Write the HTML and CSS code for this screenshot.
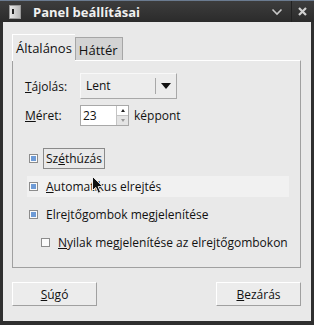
FILE: index.html
```html
<!doctype html>
<html lang="hu">
<head>
    <meta charset="UTF-8">
    <title>Panel beállításai</title>
    <link rel="stylesheet" href="styles.css">
</head>
<body>
<div class="window">
    <div class="titlebar">
        <span class="app-icon"><span class="app-icon-dot"></span></span>
        <span class="title">Panel beállításai</span>
        <span class="tb-btn tb-min">
            <svg width="12" height="8" viewBox="0 0 12 8"><path d="M1.5 1.5 L6 6 L10.5 1.5" fill="none" stroke="#c8c8c8" stroke-width="1.6"/></svg>
        </span>
        <span class="tb-btn tb-close">
            <svg width="11" height="11" viewBox="0 0 11 11"><path d="M2 2 L9 9 M9 2 L2 9" fill="none" stroke="#d0d0d0" stroke-width="2.2"/></svg>
        </span>
    </div>

    <div class="client">
        <div class="tabs">
            <div class="tab active">Általános</div>
            <div class="tab">Háttér</div>
        </div>

        <div class="pane">
            <div class="field">
                <span class="label"><u>T</u>ájolás:</span>
                <div class="combo">
                    <span class="combo-value">Lent</span>
                    <span class="combo-arrow"></span>
                </div>
            </div>

            <div class="field">
                <span class="label"><u>M</u>éret:</span>
                <div class="spin">
                    <span class="spin-value">23</span>
                    <span class="spin-btns">
                        <span class="spin-up"></span>
                        <span class="spin-down"></span>
                    </span>
                </div>
                <span class="unit">képpont</span>
            </div>

            <div class="checks">
                <div class="check">
                    <span class="box checked"></span>
                    <span class="check-label focus">Sz<u>é</u>thúzás</span>
                </div>
                <div class="check hover">
                    <span class="box checked"></span>
                    <span class="check-label"><u>A</u>utomatikus elrejtés</span>
                </div>
                <div class="check">
                    <span class="box checked"></span>
                    <span class="check-label">Elrejtő<u>g</u>ombok megjelenítése</span>
                </div>
                <div class="check sub">
                    <span class="box"></span>
                    <span class="check-label"><u>N</u>yilak megjelenítése az elrejtőgombokon</span>
                </div>
            </div>
        </div>

        <div class="buttons">
            <button class="btn"><u>S</u>úgó</button>
            <button class="btn"><u>B</u>ezárás</button>
        </div>
    </div>

    <svg class="cursor" width="12" height="19" viewBox="0 0 12 19">
        <path d="M0.5 0.5 L0.5 14.5 L3.8 11.4 L6.3 17.2 L8.6 16.2 L6.2 10.6 L10.8 10.6 Z" fill="#111" stroke="#eee" stroke-width="1"/>
    </svg>
</div>
</body>
</html>
```

FILE: styles.css
```css
html, body {
    margin: 0;
    padding: 0;
    background: #2c2c2c;
}

.window {
    position: relative;
    width: 314px;
    height: 325px;
    box-sizing: border-box;
    background: #2f2f2f;
    border-top: 1px solid #6b7b90;
    padding: 0 3px 4px 3px;
    display: flex;
    flex-direction: column;
    font-family: "Open Sans", "Noto Sans", sans-serif;
    font-size: 12px;
    color: #111;
}

.titlebar {
    height: 21px;
    display: flex;
    align-items: center;
    background: linear-gradient(#3d3d3d, #2b2b2b);
    margin: 0 -3px;
    padding-left: 9px;

    .app-icon {
        width: 12px;
        height: 14px;
        box-sizing: border-box;
        border: 1px solid #9a9a9a;
        background: linear-gradient(90deg, #e8e8e8, #b8b8b8);
        display: flex;
        align-items: center;
        padding-left: 2px;
    }

    .app-icon-dot {
        width: 2px;
        height: 5px;
        background: #222;
    }

    .title {
        margin-left: 12px;
        font-weight: bold;
        font-size: 13px;
        color: #f0f0f0;
        flex: 1;
    }

    .tb-btn {
        height: 21px;
        display: flex;
        align-items: center;
        justify-content: center;
    }

    .tb-min {
        width: 28px;
        border-right: 1px solid #222;
    }

    .tb-close {
        width: 20px;
        padding-right: 2px;
    }
}

.client {
    flex: 1;
    background: #e9e9e9;
    padding: 12px 10px 0 9px;
    display: flex;
    flex-direction: column;
}

.tabs {
    display: flex;
    align-items: flex-end;
    height: 26px;
    font-size: 13px;

    .tab {
        height: 23px;
        box-sizing: border-box;
        padding: 2px 4px 0 3px;
        background: #d3d3d3;
        border: 1px solid #a6a6a6;
        border-bottom: none;
        line-height: 20px;
    }

    .active {
        height: 27px;
        margin-bottom: -1px;
        position: relative;
        background: #e9e9e9;
        border-top-color: #ffffff;
        border-left-color: #ffffff;
        border-right: none;
        padding: 2px 3px 0 3px;
        line-height: 23px;
    }
}

.pane {
    height: 208px;
    box-sizing: border-box;
    border: 1px solid #a0a0a0;
    border-top-color: #ffffff;
    padding: 12px 12px 0 12px;

    .field {
        display: flex;
        align-items: center;
        margin-bottom: 6px;
    }

    .label {
        width: 55px;
    }

    .combo {
        width: 97px;
        height: 26px;
        box-sizing: border-box;
        border: 1px solid #a8a8a8;
        border-top-color: #f8f8f8;
        border-left-color: #f8f8f8;
        background: #ececec;
        display: flex;
        align-items: center;
    }

    .combo-value {
        flex: 1;
        padding-left: 5px;
        border-right: 1px solid #a8a8a8;
        height: 16px;
        line-height: 16px;
    }

    .combo-arrow {
        width: 0;
        height: 0;
        margin: 0 5px 0 5px;
        border-left: 5px solid transparent;
        border-right: 5px solid transparent;
        border-top: 6px solid #111;
    }

    .spin {
        display: flex;
        height: 21px;
        box-sizing: border-box;
        border: 1px solid #a8a8a8;
        background: #ffffff;
    }

    .spin-value {
        width: 33px;
        padding-left: 2px;
        line-height: 19px;
    }

    .spin-btns {
        width: 11px;
        display: flex;
        flex-direction: column;
        border-left: 1px solid #c4c4c4;
    }

    .spin-up, .spin-down {
        flex: 1;
        display: flex;
        align-items: center;
        justify-content: center;
    }

    .spin-up::after {
        content: "";
        border-left: 2px solid transparent;
        border-right: 2px solid transparent;
        border-bottom: 3px solid #222;
    }

    .spin-down {
        background: #e4e4e4;
        border-top: 1px solid #c4c4c4;

        &::after {
            content: "";
            border-left: 2px solid transparent;
            border-right: 2px solid transparent;
            border-top: 3px solid #999;
        }
    }

    .unit {
        margin-left: 5px;
    }
}

.checks {
    margin-top: 22px;
    display: flex;
    flex-direction: column;

    .check {
        display: flex;
        align-items: center;
        height: 21px;
        margin-left: 2px;
        margin-bottom: 7px;
        width: 262px;
        white-space: nowrap;
    }

    .hover {
        background: #f1f1f1;
    }

    .sub {
        margin-left: 14px;
        width: auto;
    }

    .box {
        width: 9px;
        height: 9px;
        flex-shrink: 0;
        box-sizing: border-box;
        border: 1px solid #8c8c8c;
        background: #fbfbfb;
        margin: 0 6px 0 2px;
        padding: 1px;
        display: flex;
    }

    .checked::after {
        content: "";
        flex: 1;
        background: #6e9bd6;
    }

    .check-label {
        padding: 0 2px;
        line-height: 19px;
        border: 1px solid transparent;
        margin-left: -1px;
    }

    .focus {
        border-color: #8a8a8a;
    }
}

.buttons {
    display: flex;
    justify-content: space-between;
    margin-top: 14px;

    .btn {
        width: 85px;
        height: 24px;
        box-sizing: border-box;
        font-family: inherit;
        font-size: 12px;
        color: #111;
        background: #ececec;
        border: 1px solid #a0a0a0;
        border-top-color: #ffffff;
        border-left-color: #ffffff;
        padding: 0;
    }
}

.cursor {
    position: absolute;
    left: 92px;
    top: 175px;
}
```
